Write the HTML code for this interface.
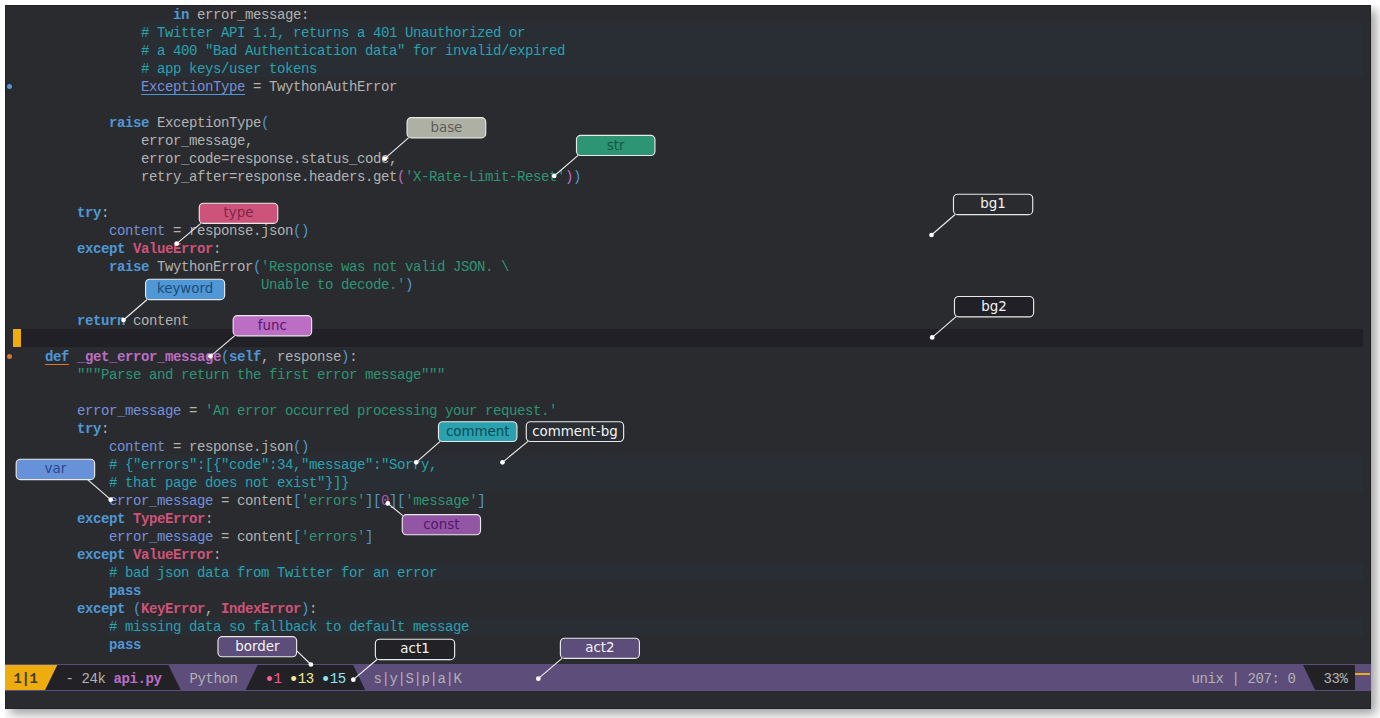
<!DOCTYPE html>
<html lang="en"><head><meta charset="utf-8"><title>spacemacs theme palette</title>
<style>
html,body{margin:0;padding:0;background:#fff;}
body{width:1380px;height:718px;position:relative;overflow:hidden;}
#ed{position:absolute;left:5px;top:5px;width:1366px;height:703.5px;background:#292b2e;box-shadow:5px 5px 10px rgba(0,0,0,.38),inset 0 0 0 1px rgba(0,0,0,.2);clip-path:inset(0 -30px -30px 0);}
.ln{position:absolute;height:18px;line-height:18px;white-space:pre;font-family:"Liberation Mono","DejaVu Sans Mono",monospace;font-size:14px;letter-spacing:-0.4px;color:#b2b2b2;}
.cbg{position:absolute;height:18px;background:#292e34;}
.b{color:#b2b2b2}.k{color:#4f97d7;font-weight:bold}.t{color:#ce537a;font-weight:bold}.f{color:#bc6ec5;font-weight:bold}
.s{color:#2d9574}.c{color:#2aa1ae}.v{color:#7590db}.n{color:#a45bad}
.p1{color:#4f97d7}.p2{color:#bc6ec5}.p3{color:#2d9574}
.ml{position:absolute;white-space:pre;font-family:"Liberation Mono","DejaVu Sans Mono",monospace;font-size:14px;letter-spacing:-0.4px;line-height:18px;height:18px;color:#b2b2b2;top:670px;}
.bu{display:inline-block;width:8px;font-size:18px;line-height:0;text-indent:-1.5px;position:relative;top:2.0px;}
svg{position:absolute;left:0;top:0;}
</style></head><body>
<div id="ed"></div>

<div class="cbg" style="left:141px;top:23px;width:1222px"></div>
<div class="cbg" style="left:141px;top:41px;width:1222px"></div>
<div class="cbg" style="left:141px;top:59px;width:1222px"></div>
<div class="cbg" style="left:109px;top:455px;width:1254px"></div>
<div class="cbg" style="left:109px;top:473px;width:1254px"></div>
<div class="cbg" style="left:109px;top:563px;width:1254px"></div>
<div class="cbg" style="left:109px;top:617px;width:1254px"></div>
<div style="position:absolute;left:13px;top:329px;width:1350px;height:18px;background:#212026"></div>
<div style="position:absolute;left:13px;top:329px;width:8px;height:18px;background:#eead0e"></div>
<div class="ln" style="left:173px;top:6px"><span class="k">in</span><span class="b"> error_message:</span></div>
<div class="ln" style="left:141px;top:24px"><span class="c"># Twitter API 1.1, returns a 401 Unauthorized or</span></div>
<div class="ln" style="left:141px;top:42px"><span class="c"># a 400 "Bad Authentication data" for invalid/expired</span></div>
<div class="ln" style="left:141px;top:60px"><span class="c"># app keys/user tokens</span></div>
<div class="ln" style="left:141px;top:78px"><span class="v ul1">ExceptionType</span><span class="b"> = TwythonAuthError</span></div>
<div class="ln" style="left:109px;top:114px"><span class="k">raise</span><span class="b"> ExceptionType</span><span class="p1">(</span></div>
<div class="ln" style="left:141px;top:132px"><span class="b">error_message,</span></div>
<div class="ln" style="left:141px;top:150px"><span class="b">error_code=response.status_code,</span></div>
<div class="ln" style="left:141px;top:168px"><span class="b">retry_after=response.headers.get</span><span class="p2">(</span><span class="s">'X-Rate-Limit-Reset'</span><span class="p2">)</span><span class="p1">)</span></div>
<div class="ln" style="left:77px;top:204px"><span class="k">try</span><span class="b">:</span></div>
<div class="ln" style="left:109px;top:222px"><span class="v">content</span><span class="b"> = response.json</span><span class="p1">()</span></div>
<div class="ln" style="left:77px;top:240px"><span class="k">except</span><span class="b"> </span><span class="t">ValueError</span><span class="b">:</span></div>
<div class="ln" style="left:109px;top:258px"><span class="k">raise</span><span class="b"> TwythonError</span><span class="p1">(</span><span class="s">'Response was not valid JSON. \</span></div>
<div class="ln" style="left:261px;top:276px"><span class="s">Unable to decode.'</span><span class="p1">)</span></div>
<div class="ln" style="left:77px;top:312px"><span class="k">return</span><span class="b"> content</span></div>
<div class="ln" style="left:45px;top:348px"><span class="k ul2">def</span><span class="b"> </span><span class="f">_get_error_message</span><span class="p1">(</span><span class="k">self</span><span class="b">, response</span><span class="p1">)</span><span class="b">:</span></div>
<div class="ln" style="left:77px;top:366px"><span class="s">"""Parse and return the first error message"""</span></div>
<div class="ln" style="left:77px;top:402px"><span class="v">error_message</span><span class="b"> = </span><span class="s">'An error occurred processing your request.'</span></div>
<div class="ln" style="left:77px;top:420px"><span class="k">try</span><span class="b">:</span></div>
<div class="ln" style="left:109px;top:438px"><span class="v">content</span><span class="b"> = response.json</span><span class="p1">()</span></div>
<div class="ln" style="left:109px;top:456px"><span class="c"># {"errors":[{"code":34,"message":"Sorry,</span></div>
<div class="ln" style="left:109px;top:474px"><span class="c"># that page does not exist"}]}</span></div>
<div class="ln" style="left:109px;top:492px"><span class="v">error_message</span><span class="b"> = content</span><span class="p1">[</span><span class="s">'errors'</span><span class="p1">][</span><span class="n">0</span><span class="p1">][</span><span class="s">'message'</span><span class="p1">]</span></div>
<div class="ln" style="left:77px;top:510px"><span class="k">except</span><span class="b"> </span><span class="t">TypeError</span><span class="b">:</span></div>
<div class="ln" style="left:109px;top:528px"><span class="v">error_message</span><span class="b"> = content</span><span class="p1">[</span><span class="s">'errors'</span><span class="p1">]</span></div>
<div class="ln" style="left:77px;top:546px"><span class="k">except</span><span class="b"> </span><span class="t">ValueError</span><span class="b">:</span></div>
<div class="ln" style="left:109px;top:564px"><span class="c"># bad json data from Twitter for an error</span></div>
<div class="ln" style="left:109px;top:582px"><span class="k">pass</span></div>
<div class="ln" style="left:77px;top:600px"><span class="k">except</span><span class="b"> </span><span class="p1">(</span><span class="t">KeyError</span><span class="b">, </span><span class="t">IndexError</span><span class="p1">)</span><span class="b">:</span></div>
<div class="ln" style="left:109px;top:618px"><span class="c"># missing data so fallback to default message</span></div>
<div class="ln" style="left:109px;top:636px"><span class="k">pass</span></div>
<div style="position:absolute;left:141px;top:94px;width:104px;height:1px;background:#4f97d7"></div>
<div style="position:absolute;left:45px;top:364px;width:24px;height:1px;background:#dc752f"></div>
<div style="position:absolute;left:7px;top:84px;width:5px;height:5px;border-radius:50%;background:#4f97d7"></div>
<div style="position:absolute;left:7px;top:354px;width:5px;height:5px;border-radius:50%;background:#dc752f"></div>
<svg width="1380" height="718" viewBox="0 0 1380 718">
<rect x="5" y="664" width="1366" height="27" fill="#5d4d7a"/>
<polygon points="5,665 57.4,665 45.2,690 5,690" fill="#eead0e"/>
<polygon points="57.4,665 168.5,665 180.8,690 45.2,690" fill="#222226"/>
<polygon points="257.6,665 353.2,665 365.2,690 245.6,690" fill="#222226"/>
<polygon points="1303,665 1355,665 1355,690 1315,690" fill="#222226"/>
<rect x="1355" y="673" width="15" height="2" fill="#eead0e"/>
</svg>
<div class="ml" style="left:13.6px;color:#3e3d31;font-weight:bold">1|1</div>
<div class="ml" style="left:65.6px;">- 24k <span style="color:#bc6ec5;font-weight:bold">api.py</span></div>
<div class="ml" style="left:189.6px;">Python</div>
<div class="ml" style="left:265.6px;"><span style="color:#FC5C94"><span class="bu">•</span>1</span> <span style="color:#F3EA98"><span class="bu">•</span>13</span> <span style="color:#8DE6F7"><span class="bu">•</span>15</span></div>
<div class="ml" style="left:373.6px;">s|y|S|p|a|K</div>
<div class="ml" style="left:1191.6px;">unix | 207: 0</div>
<div class="ml" style="left:1323.6px;">33%</div>
<svg id="ann" width="1380" height="718" viewBox="0 0 1380 718" font-family="'DejaVu Sans','Liberation Sans',sans-serif" font-size="13.4" text-anchor="middle">
<line x1="408.7" y1="137.70000000000002" x2="384.8" y2="158.7" stroke="#f2f2f2" stroke-width="1.1"/>
<circle cx="384.8" cy="158.7" r="2.35" fill="#fff"/>
<rect x="407.07" y="117.58" width="78.65" height="20.25" rx="4.2" fill="#aeb0a3" stroke="#e9e9e9" stroke-width="1.15"/>
<text x="446.40" y="131.70" fill="#5c5c5c">base</text>
<line x1="578.1" y1="155.4" x2="554.2" y2="176.0" stroke="#f2f2f2" stroke-width="1.1"/>
<circle cx="554.2" cy="176.0" r="2.35" fill="#fff"/>
<rect x="576.48" y="135.38" width="78.45" height="20.15" rx="4.2" fill="#2d9574" stroke="#e9e9e9" stroke-width="1.15"/>
<text x="615.70" y="149.50" fill="#155540">str</text>
<line x1="200.89999999999998" y1="223.3" x2="176.7" y2="243.7" stroke="#f2f2f2" stroke-width="1.1"/>
<circle cx="176.7" cy="243.7" r="2.35" fill="#fff"/>
<rect x="199.27" y="203.27" width="78.45" height="20.15" rx="4.2" fill="#ce537a" stroke="#e9e9e9" stroke-width="1.15"/>
<text x="238.50" y="217.40" fill="#7e2545">type</text>
<line x1="955.1" y1="214.5" x2="931.5" y2="235.0" stroke="#f2f2f2" stroke-width="1.1"/>
<circle cx="931.5" cy="235.0" r="2.35" fill="#fff"/>
<rect x="953.48" y="194.27" width="79.25" height="20.35" rx="4.2" fill="#292b2e" stroke="#e9e9e9" stroke-width="1.15"/>
<text x="993.10" y="208.40" fill="#f4f4f4">bg1</text>
<line x1="147.2" y1="299.5" x2="123.5" y2="320.0" stroke="#f2f2f2" stroke-width="1.1"/>
<circle cx="123.5" cy="320.0" r="2.35" fill="#fff"/>
<rect x="145.57" y="279.27" width="79.05" height="20.35" rx="4.2" fill="#4f97d7" stroke="#e9e9e9" stroke-width="1.15"/>
<text x="185.10" y="293.40" fill="#1a4c78">keyword</text>
<line x1="956.1" y1="316.7" x2="932.2" y2="337.4" stroke="#f2f2f2" stroke-width="1.1"/>
<circle cx="932.2" cy="337.4" r="2.35" fill="#fff"/>
<rect x="954.48" y="296.47" width="79.15" height="20.35" rx="4.2" fill="#212026" stroke="#e9e9e9" stroke-width="1.15"/>
<text x="994.05" y="310.60" fill="#f4f4f4">bg2</text>
<line x1="234.79999999999998" y1="335.7" x2="210.4" y2="356.3" stroke="#f2f2f2" stroke-width="1.1"/>
<circle cx="210.4" cy="356.3" r="2.35" fill="#fff"/>
<rect x="233.17" y="315.68" width="78.45" height="20.15" rx="4.2" fill="#bc6ec5" stroke="#e9e9e9" stroke-width="1.15"/>
<text x="272.40" y="329.80" fill="#5e1667">func</text>
<line x1="440.09999999999997" y1="441.40000000000003" x2="416.2" y2="462.3" stroke="#f2f2f2" stroke-width="1.1"/>
<circle cx="416.2" cy="462.3" r="2.35" fill="#fff"/>
<rect x="438.47" y="421.77" width="78.45" height="19.75" rx="4.2" fill="#2aa1ae" stroke="#e9e9e9" stroke-width="1.15"/>
<text x="477.70" y="435.90" fill="#0b4a52">comment</text>
<line x1="527.9000000000001" y1="441.40000000000003" x2="502.5" y2="462.3" stroke="#f2f2f2" stroke-width="1.1"/>
<circle cx="502.5" cy="462.3" r="2.35" fill="#fff"/>
<rect x="526.28" y="421.77" width="97.35" height="19.75" rx="4.2" fill="#292e34" stroke="#e9e9e9" stroke-width="1.15"/>
<text x="574.95" y="435.90" fill="#f4f4f4">comment-bg</text>
<line x1="87.6" y1="479.6" x2="110.7" y2="499.7" stroke="#f2f2f2" stroke-width="1.1"/>
<circle cx="110.7" cy="499.7" r="2.35" fill="#fff"/>
<rect x="16.18" y="459.27" width="78.45" height="20.35" rx="4.2" fill="#6791d9" stroke="#e9e9e9" stroke-width="1.15"/>
<text x="55.40" y="473.40" fill="#29488c">var</text>
<line x1="402.8" y1="515.6" x2="387.8" y2="503.4" stroke="#f2f2f2" stroke-width="1.1"/>
<circle cx="387.8" cy="503.4" r="2.35" fill="#fff"/>
<rect x="402.27" y="514.68" width="78.25" height="20.05" rx="4.2" fill="#9356a5" stroke="#e9e9e9" stroke-width="1.15"/>
<text x="441.40" y="528.80" fill="#52156d">const</text>
<line x1="296.8" y1="650.8" x2="310.9" y2="664.5" stroke="#f2f2f2" stroke-width="1.1"/>
<circle cx="310.9" cy="664.5" r="2.35" fill="#fff"/>
<rect x="217.97" y="636.58" width="78.65" height="20.15" rx="4.2" fill="#5d4d7a" stroke="#e9e9e9" stroke-width="1.15"/>
<text x="257.30" y="650.70" fill="#f4f4f4">border</text>
<line x1="377.0" y1="659.5" x2="353.3" y2="679.7" stroke="#f2f2f2" stroke-width="1.1"/>
<circle cx="353.3" cy="679.7" r="2.35" fill="#fff"/>
<rect x="375.38" y="639.28" width="79.25" height="20.35" rx="4.2" fill="#222226" stroke="#e9e9e9" stroke-width="1.15"/>
<text x="415.00" y="653.40" fill="#f4f4f4">act1</text>
<line x1="562.0" y1="658.3" x2="538.3" y2="678.7" stroke="#f2f2f2" stroke-width="1.1"/>
<circle cx="538.3" cy="678.7" r="2.35" fill="#fff"/>
<rect x="560.38" y="638.28" width="79.05" height="20.15" rx="4.2" fill="#5d4d7a" stroke="#e9e9e9" stroke-width="1.15"/>
<text x="599.90" y="652.40" fill="#f4f4f4">act2</text>
</svg>
</body></html>
